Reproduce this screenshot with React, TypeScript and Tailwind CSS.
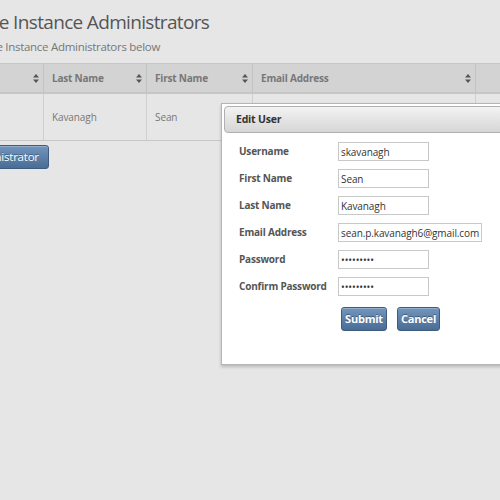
import React from "react";

const columns = [
  { label: "Username", width: "w-[110px]" },
  { label: "Last Name", width: "w-[103px]" },
  { label: "First Name", width: "w-[106px]" },
  { label: "Email Address", width: "w-[223px]" },
];

const row = ["skavanagh", "Kavanagh", "Sean", "sean.p.kavanagh6@gmail.com"];

function SortIcon() {
  return (
    <svg width="6" height="9" viewBox="0 0 6 9" className="shrink-0">
      <path d="M3 0L6 3.5H0Z" fill="#555" />
      <path d="M3 9L6 5.5H0Z" fill="#555" />
    </svg>
  );
}

const fields = [
  { label: "Username", value: "skavanagh", type: "text", wide: false },
  { label: "First Name", value: "Sean", type: "text", wide: false },
  { label: "Last Name", value: "Kavanagh", type: "text", wide: false },
  { label: "Email Address", value: "sean.p.kavanagh6@gmail.com", type: "text", wide: true },
  { label: "Password", value: "password1", type: "password", wide: false },
  { label: "Confirm Password", value: "password1", type: "password", wide: false },
];

const btn =
  "h-[24px] rounded-[3px] border border-[#3d5c80] bg-gradient-to-b from-[#7295bd] to-[#4a6d96] text-white [text-shadow:0_-1px_0_rgba(0,0,0,0.35)] shadow-[inset_0_1px_0_rgba(255,255,255,0.25)]";

export default function App() {
  return (
    <div
      className="relative w-[500px] h-[500px] overflow-hidden bg-[#e6e6e6]"
      style={{ fontFamily: '"Open Sans", "Noto Sans", sans-serif' }}
    >
      <div className="-ml-[58px] w-[620px]">
        {/* Heading */}
        <h1 className="pt-[7px] text-[19px] leading-[30px] tracking-[-0.035em] text-[#555]">
          Manage Instance Administrators
        </h1>
        <p className="mt-[2px] text-[11.5px] leading-[16px] tracking-[-0.025em] text-[#777]">
          Manage the Instance Administrators below
        </p>

        {/* Table */}
        <div className="mt-[8px] -ml-[8px] border-t border-[#c6c6c6]">
          <div className="flex h-[30px] bg-[#d3d3d3] border-b-2 border-[#c6c6c6]">
            {columns.map((c) => (
              <div
                key={c.label}
                className={`${c.width} flex items-center justify-between pl-[8px] pr-[4px] border-r border-[#c2c2c2] text-[10px] tracking-[-0.02em] font-bold text-[#777]`}
              >
                <span>{c.label}</span>
                <SortIcon />
              </div>
            ))}
            <div className="flex-1" />
          </div>
          <div className="flex h-[47px] border-b border-[#c6c6c6]">
            {row.map((v, i) => (
              <div
                key={i}
                className={`${columns[i].width} flex items-center pl-[8px] border-r border-[#cfcfcf] text-[10px] tracking-[-0.01em] text-[#777]`}
              >
                {v}
              </div>
            ))}
            <div className="flex-1" />
          </div>
        </div>

        <button className={`${btn} -ml-[8px] mt-[4px] h-[23px] w-[115px] text-[11.5px] tracking-[-0.02em]`}>
          Add Administrator
        </button>
      </div>

      {/* Edit dialog */}
      <div className="absolute left-[221px] top-[103px] w-[300px] h-[262px] bg-white border border-[#b5b5b5] shadow-[0_2px_3px_rgba(0,0,0,0.2)] p-[2px]">
        <div className="h-[27px] rounded-[4px] border border-[#b0b0b0] bg-gradient-to-b from-[#f3f3f3] to-[#d6d6d6] flex items-center pl-[11px] text-[10.5px] tracking-[-0.02em] font-bold text-[#333]">
          Edit User
        </div>
        <div className="pl-[15px] pt-[9px] flex flex-col gap-[8px]">
          {fields.map((f) => (
            <div key={f.label} className="flex items-center h-[19px]">
              <label className="w-[99px] whitespace-nowrap text-[10px] tracking-[-0.02em] font-bold text-[#555]">
                {f.label}
              </label>
              <input
                readOnly
                type={f.type}
                value={f.value}
                className={`${f.wide ? "w-[144px]" : "w-[91px]"} h-[19px] border border-[#c8c8c8] px-[2px] text-[10px] tracking-[-0.01em] text-[#333] outline-none`}
              />
            </div>
          ))}
          <div className="flex gap-[10px] pl-[102px] mt-[3px]">
            <button className={`${btn} w-[46px] text-[11px] font-bold tracking-[-0.02em]`}>Submit</button>
            <button className={`${btn} w-[43px] text-[11px] font-bold tracking-[-0.02em]`}>Cancel</button>
          </div>
        </div>
      </div>
    </div>
  );
}
